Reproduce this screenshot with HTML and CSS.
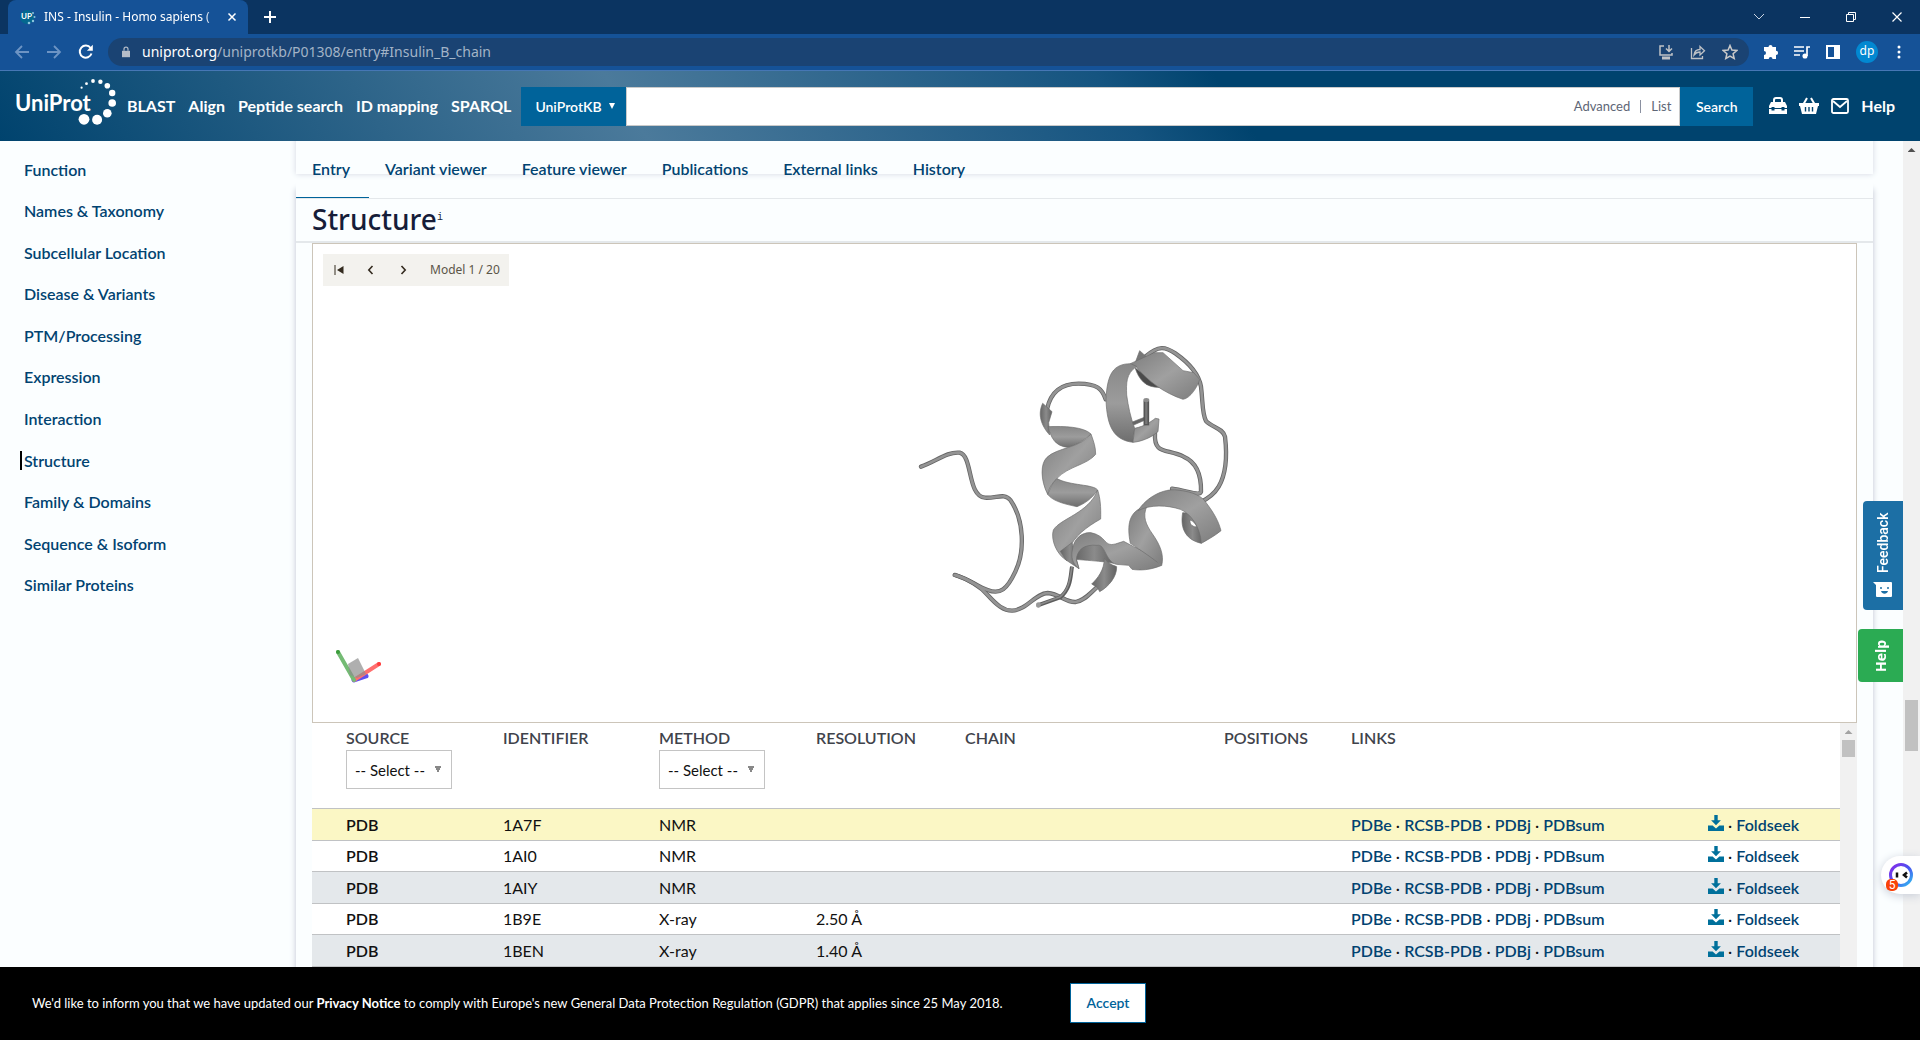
FILE: index.html
```html
<!DOCTYPE html>
<html lang="en">
<head>
<meta charset="utf-8">
<title>INS - Insulin - Homo sapiens | UniProtKB | UniProt</title>
<link rel="stylesheet" href="styles.css">
</head>
<body>
<svg class="defs" aria-hidden="true">
  <defs>
    <symbol id="download" viewBox="0 0 16 16"><path d="M6.300 0h3.400v5.200h3.200L8 10.200 3.100 5.200h3.200z"/><path d="M0 10.500h4.600L8 13.500l3.400-3h4.600V16H0z"/></symbol>
    <linearGradient id="g1" x1="0" y1="0" x2="1" y2="1"><stop offset="0" stop-color="#7e7e7e"/><stop offset=".5" stop-color="#a0a0a0"/><stop offset="1" stop-color="#7c7c7c"/></linearGradient>
    <linearGradient id="g2" x1="0" y1="0" x2="0" y2="1"><stop offset="0" stop-color="#888"/><stop offset=".5" stop-color="#9c9c9c"/><stop offset="1" stop-color="#6e6e6e"/></linearGradient>
    <linearGradient id="g3" x1="0" y1="0" x2="1" y2="0"><stop offset="0" stop-color="#666"/><stop offset=".5" stop-color="#8b8b8b"/><stop offset="1" stop-color="#626262"/></linearGradient>
    <linearGradient id="face" x1="0" y1="0" x2="1" y2="1"><stop offset="0" stop-color="#8a2be8"/><stop offset=".5" stop-color="#4a52f0"/><stop offset="1" stop-color="#31c0f0"/></linearGradient>
  </defs>
</svg>

<div class="tabstrip">
  <div class="browser-tab">
    <svg class="favicon" viewBox="0 0 16 16"><circle cx="7" cy="8" r="7" fill="#04688f"/><text x="1" y="10" font-size="8" font-weight="700" fill="#fff" font-family="Lato, sans-serif">UP</text><g fill="#8cc6dd"><circle cx="13" cy="4" r="1"/><circle cx="14.500" cy="8" r="1"/><circle cx="13" cy="12" r="1.200"/><circle cx="9" cy="14" r="1.300"/></g></svg>
    <span class="tab-title">INS - Insulin - Homo sapiens (</span>
    <button class="plain" aria-label="Close tab"><svg width="10" height="10" viewBox="0 0 10 10"><path d="M1.500 1.500l7 7m0-7l-7 7" stroke="#fff" stroke-width="1.500"/></svg></button>
  </div>
  <button class="plain new-tab" aria-label="New tab"><svg width="12" height="12" viewBox="0 0 12 12"><path d="M6 0v12M0 6h12" stroke="#fff" stroke-width="2"/></svg></button>
  <div class="window-buttons">
    <button class="plain" aria-label="Search tabs"><svg width="12" height="12" viewBox="0 0 12 12"><path d="M1 3l5 5 5-5" fill="none" stroke="#c9d4e2"/></svg></button>
    <button class="plain" aria-label="Minimize"><svg width="12" height="12" viewBox="0 0 12 12"><path d="M1 6.500h10" stroke="#fff"/></svg></button>
    <button class="plain" aria-label="Restore"><svg width="12" height="12" viewBox="0 0 12 12"><path d="M1.500 3.500h7v7h-7zM3.500 3V1.500h7v7H9" fill="none" stroke="#fff"/></svg></button>
    <button class="plain" aria-label="Close"><svg width="12" height="12" viewBox="0 0 12 12"><path d="M1.500 1.500l9 9m0-9l-9 9" stroke="#fff" stroke-width="1.200"/></svg></button>
  </div>
</div>

<div class="toolbar">
  <div class="history-buttons">
    <button class="plain" aria-label="Back"><svg width="16" height="16" viewBox="0 0 16 16"><path d="M15 8H2m6-6L2 8l6 6" fill="none" stroke="#6d94c4" stroke-width="1.800"/></svg></button>
    <button class="plain" aria-label="Forward"><svg width="16" height="16" viewBox="0 0 16 16"><path d="M1 8h13M8 2l6 6-6 6" fill="none" stroke="#6d94c4" stroke-width="1.800"/></svg></button>
    <button class="plain" aria-label="Reload"><svg width="16" height="16" viewBox="0 0 16 16"><path d="M13.500 9.500A6 6 0 1 1 12.600 4" fill="none" stroke="#fff" stroke-width="2"/><path d="M14.800.800v6H8.900z" fill="#fff"/></svg></button>
  </div>
  <div class="omnibox">
    <svg width="8" height="12" viewBox="0 0 10 13"><path d="M0 5h10v8H0z" fill="#b4bcc8"/><path d="M2.500 5V3a2.500 2.500 0 0 1 5 0v2" fill="none" stroke="#b4bcc8" stroke-width="1.500"/></svg>
    <span class="url"><span class="domain">uniprot.org</span>/uniprotkb/P01308/entry#Insulin_B_chain</span>
    <svg width="16" height="16" viewBox="0 0 16 16" fill="none" stroke="#bfc2c6" stroke-width="1.500"><path d="M6 2H2v9h12V9M11 1v6M8 4.500l3 3 3-3"/><path d="M4 14h8" stroke-width="3"/></svg>
    <svg width="16" height="16" viewBox="0 0 16 16" fill="none" stroke="#bfc2c6" stroke-width="1.300"><path d="M1.500 4v10.500h11V12M4 11c.500-4 3-5.500 6-5.500V2.500l4.500 4.300L10 11V8c-3 0-4.500 1-6 3z"/></svg>
    <svg width="16" height="16" viewBox="0 0 16 16" fill="none" stroke="#c9c9c9" stroke-width="1.500"><path d="M8 1.500l1.900 4.600 4.900.400-3.700 3.200 1.100 4.800L8 12l-4.200 2.500 1.100-4.800L1.200 6.500l4.900-.400z"/></svg>
  </div>
  <div class="extensions">
    <svg width="16" height="16" viewBox="0 0 16 16" fill="#fff"><path d="M5.500 3a2 2 0 0 1 4 0H13v3.800a2.100 2.100 0 0 1 0 4.200v4H9.500a1.900 1.900 0 0 0-3.800 0H1v-4a2 2 0 0 0 0-4V3z"/></svg>
    <svg width="16" height="16" viewBox="0 0 16 16" fill="none" stroke="#fff" stroke-width="1.700"><path d="M0 3h10M0 7h10M0 11h6M16 3h-3v9"/><circle cx="11" cy="12" r="1.700" fill="#fff"/></svg>
    <svg width="16" height="16" viewBox="0 0 16 16"><path d="M1 1h14v14H1zM3 3v10h6V3z" fill="#fff" fill-rule="evenodd"/></svg>
    <span class="avatar">dp</span>
    <svg width="4" height="14" viewBox="0 0 4 14" fill="#fff"><circle cx="2" cy="2" r="1.500"/><circle cx="2" cy="7" r="1.500"/><circle cx="2" cy="12" r="1.500"/></svg>
  </div>
</div>

<header class="site-header">
  <a href="#" class="logo" aria-label="UniProt home">
    <svg width="101" height="50" viewBox="0 0 101 50" fill="#fff"><text x="-1" y="34" class="logo-text">UniProt</text><circle cx="65.600" cy="10.700" r="1.100"/><circle cx="70.500" cy="6.700" r="1.400"/><circle cx="77" cy="4" r="1.900"/><circle cx="84.400" cy="4.700" r="2.200"/><circle cx="91.300" cy="8.700" r="2.800"/><circle cx="96.200" cy="16" r="3.200"/><circle cx="96.200" cy="26" r="3.800"/><circle cx="91.300" cy="36.300" r="4.300"/><circle cx="81.100" cy="42.700" r="5"/><circle cx="68" cy="42.300" r="5.400"/></svg>
  </a>
  <nav class="tools">
    <a href="#">BLAST</a><a href="#">Align</a><a href="#">Peptide search</a><a href="#">ID mapping</a><a href="#">SPARQL</a>
  </nav>
  <form class="search">
    <button type="button" class="namespace">UniProtKB <svg width="6" height="6" viewBox="0 0 6 6"><path d="M0 0h6L3 6z" fill="#fff"/></svg></button>
    <div class="search-box">
      <input type="text" aria-label="Search UniProtKB">
      <a href="#">Advanced</a><span class="divider"></span><a href="#">List</a>
    </div>
    <button type="button" class="go">Search</button>
  </form>
  <nav class="user-links">
    <a href="#" aria-label="Tool results"><svg width="18" height="18" viewBox="0 0 18 18"><path d="M5 5V3a2 2 0 0 1 2-2h4a2 2 0 0 1 2 2v2" fill="none" stroke="#fff" stroke-width="2"/><path d="M2 5h14l2 4v2h-2.500v-1h-3v1h-7v-1h-3v1H0V9zM0 12h2.500v1.500h3V12h7v1.500h3V12H18v5H0z" fill="#fff"/></svg></a>
    <a href="#" aria-label="Basket"><svg width="20" height="18" viewBox="0 0 20 18"><path d="M4 8l4-7m8 7l-4-7" stroke="#fff" stroke-width="2"/><path d="M0 6h20v3h-1l-2 8H3L1 9H0z" fill="#fff"/><path d="M6.500 10v4.500m3.500-4.500v4.500m3.500-4.500v4.500" stroke="#00436e" stroke-width="1.400"/></svg></a>
    <a href="#" aria-label="Contact"><svg width="18" height="16" viewBox="0 0 18 16" fill="none" stroke="#fff" stroke-width="1.800"><rect x="1" y="1" width="16" height="14" rx="1.500"/><path d="M2 3l7 6 7-6"/></svg></a>
    <a href="#" class="help-link">Help</a>
  </nav>
</header>

<div class="page">
  <aside class="sidebar">
    <ul>
      <li><a href="#">Function</a></li>
      <li><a href="#">Names &amp; Taxonomy</a></li>
      <li><a href="#">Subcellular Location</a></li>
      <li><a href="#">Disease &amp; Variants</a></li>
      <li><a href="#">PTM/Processing</a></li>
      <li><a href="#">Expression</a></li>
      <li><a href="#">Interaction</a></li>
      <li><a href="#" class="current">Structure</a></li>
      <li><a href="#">Family &amp; Domains</a></li>
      <li><a href="#">Sequence &amp; Isoform</a></li>
      <li><a href="#">Similar Proteins</a></li>
    </ul>
  </aside>

  <main>
    <nav class="entry-tabs">
      <a href="#" class="active">Entry</a><a href="#">Variant viewer</a><a href="#">Feature viewer</a><a href="#">Publications</a><a href="#">External links</a><a href="#">History</a>
    </nav>
    <section class="card">
      <h2>Structure<sup>i</sup></h2>
      <div class="card-body">
        <div class="viewer">
          <div class="model-bar">
            <button class="plain" aria-label="First model"><svg width="10" height="10" viewBox="0 0 10 10"><path d="M.500 0h1v10h-1zM9.500 1v8L3 5z" fill="#332b1f"/></svg></button>
            <button class="plain" aria-label="Previous model"><svg width="10" height="10" viewBox="0 0 10 10"><path d="M6.500 1L2.800 5l3.700 4" fill="none" stroke="#332b1f" stroke-width="1.600"/></svg></button>
            <button class="plain" aria-label="Next model"><svg width="10" height="10" viewBox="0 0 10 10"><path d="M3.500 1l3.700 4-3.700 4" fill="none" stroke="#332b1f" stroke-width="1.600"/></svg></button>
            <span>Model 1 / 20</span>
          </div>
          <svg class="protein" viewBox="14 24 1080 930" role="img" aria-label="Insulin structure">
            <g class="coil-edge">
              <path id="c1" d="M62 440C105 426 140 394 178 398C218 408 200 528 254 533C290 535 312 518 330 540C372 600 374 695 345 755C320 808 300 825 262 810C230 800 205 775 163 765"/>
              <path id="c2" d="M165 765C215 782 240 800 262 825C290 856 310 872 335 872C380 870 405 820 442 819C480 822 495 848 526 846C555 840 568 820 592 800"/>
              <path id="c4" d="M440 268C452 210 490 191 535 191C590 192 605 205 616 238"/>
              <path id="c5" d="M735 110C775 75 795 80 825 100C868 130 895 160 902 200C908 250 905 280 917 303C935 322 968 325 974 350C980 400 978 460 955 500C942 522 925 535 900 547"/>
              <path id="c6" d="M764 340C760 405 800 385 850 410C892 428 903 470 902 515C898 530 860 512 815 506"/>
            </g>
            <g class="coil-light">
              <use href="#c1"/><use href="#c2"/><use href="#c4"/><use href="#c5"/><use href="#c6"/>
            </g>
            <g class="ribbon">
              <path fill="url(#g3)" d="M524 718C522 676 560 662 600 662L630 700L640 730L614 726C590 723 560 721 524 718Z"/>
              <path fill="url(#g3)" d="M612 715C625 733 640 736 649 740C650 770 625 800 598 815L592 803L574 792C592 775 612 750 612 715Z"/>
              <path fill="url(#g3)" d="M427 250L455 275L445 308L448 345C430 325 408 290 427 250Z"/>
              <path fill="url(#g2)" d="M443 320C490 318 550 320 572 342C552 360 530 375 505 382C462 380 452 350 443 320Z"/>
              <path fill="url(#g2)" d="M468 475C510 498 578 492 592 510C575 535 555 550 530 560C480 550 455 540 442 523C450 505 455 490 468 475Z"/>
              <path fill="url(#g1)" d="M572 342C580 365 586 380 586 403C560 435 505 438 470 475C455 490 445 505 442 523C420 480 420 430 440 412C470 382 540 385 572 342Z"/>
              <path fill="url(#g1)" d="M592 510C600 535 602 560 601 597C560 620 520 650 508 685C495 695 493 705 500 722C470 705 450 660 459 630C480 595 565 580 592 510Z"/>
              <path fill="url(#g3)" d="M480 694L515 668L536 746L497 720Z"/>
              <path fill="url(#g1)" d="M516 690C520 655 545 636 572 638C620 648 610 682 645 672L670 664L700 680C750 700 768 725 782 737C750 750 720 752 695 748L685 736L648 733C615 725 615 670 590 676C550 672 530 690 528 720L536 746C515 730 512 710 516 690Z"/>
              <path fill="url(#g1)" d="M690 670C678 610 690 580 720 565L740 558C725 590 738 615 755 640C780 675 792 705 784 737C762 718 720 690 690 670Z"/>
              <path fill="url(#g3)" fill-rule="evenodd" d="M847 578C838 630 860 660 903 670L908 610L880 580ZM869 600C867 615 880 622 890 620C884 610 878 602 869 600Z"/>
              <path fill="url(#g1)" d="M713 572C740 530 790 505 830 510C880 515 905 530 915 545C942 580 955 605 962 632C940 650 920 660 903 670C900 620 870 580 840 568C800 555 750 553 713 572Z"/>
              <path fill="#777" d="M704 130L718 92L738 110L725 135Z"/>
              <path fill="#4b4b4b" d="M704 143L782 202C735 205 716 178 704 143Z"/>
              <path fill="url(#g1)" d="M690 131L762 98L788 98L848 152L880 158L898 178C892 200 870 235 848 238C790 218 745 185 707 140Z"/>
              <path fill="url(#g2)" d="M709 139C676 162 678 190 679 225C684 260 690 290 703 325L698 367C640 360 620 320 617 240C620 160 640 132 690 131Z"/>
              <path fill="#666" d="M696 306L742 288L744 296L700 315Z"/>
              <path fill="url(#g1)" d="M698 367L703 325C735 318 750 306 765 295L776 297L773 335C750 355 720 365 698 367Z"/>
            </g>
            <path d="M738 316V242" stroke="#555" stroke-width="17"/>
            <path d="M738 312V242" stroke="#777" stroke-width="7"/>
            <ellipse cx="738" cy="240" rx="9" ry="6" fill="#8c8c8c"/>
            <path d="M412 856L480 832C512 805 510 770 515 740" fill="none" stroke="#5d5d5d" stroke-width="12"/>
            <path d="M416 854L480 830C510 803 509 770 515 740" fill="none" stroke="#8a8a8a" stroke-width="5"/>
            <ellipse cx="414" cy="855" rx="7" ry="8" fill="#999"/>
          </svg>
          <svg class="axes" width="50" height="36" viewBox="0 0 50 36" stroke-linecap="round">
            <path d="M18 32l12-4" stroke="#5c50f0" stroke-width="5"/>
            <path d="M18 32L43 16" stroke="#ff6f6f" stroke-width="4"/>
            <path d="M18 32L2 4" stroke="#74bb74" stroke-width="4"/>
            <path d="M12 16l10-6 8 16-9 4-7-3z" fill="#8d8d8d" fill-opacity=".700"/>
            <circle cx="2" cy="4" r="2" fill="#3c9c3c"/><circle cx="43" cy="16" r="2" fill="#ff3c3c"/>
          </svg>
        </div>
        <div class="table-wrap">
          <table>
            <colgroup><col class="c-source"><col class="c-id"><col class="c-method"><col class="c-res"><col><col class="c-pos"><col class="c-links"><col class="c-tools"></colgroup>
            <thead>
              <tr>
                <th><label for="source">SOURCE</label><select id="source"><option>-- Select --</option></select></th>
                <th>IDENTIFIER</th>
                <th><label for="method">METHOD</label><select id="method"><option>-- Select --</option></select></th>
                <th>RESOLUTION</th><th>CHAIN</th><th>POSITIONS</th><th>LINKS</th><th></th>
              </tr>
            </thead>
            <tbody>
              <tr class="selected"><td>PDB</td><td>1A7F</td><td>NMR</td><td></td><td></td><td></td><td><a href="#">PDBe</a> · <a href="#">RCSB-PDB</a> · <a href="#">PDBj</a> · <a href="#">PDBsum</a></td><td><a href="#" aria-label="Download"><svg class="dl"><use href="#download"/></svg></a> · <a href="#">Foldseek</a></td></tr>
              <tr><td>PDB</td><td>1AI0</td><td>NMR</td><td></td><td></td><td></td><td><a href="#">PDBe</a> · <a href="#">RCSB-PDB</a> · <a href="#">PDBj</a> · <a href="#">PDBsum</a></td><td><a href="#" aria-label="Download"><svg class="dl"><use href="#download"/></svg></a> · <a href="#">Foldseek</a></td></tr>
              <tr class="shaded"><td>PDB</td><td>1AIY</td><td>NMR</td><td></td><td></td><td></td><td><a href="#">PDBe</a> · <a href="#">RCSB-PDB</a> · <a href="#">PDBj</a> · <a href="#">PDBsum</a></td><td><a href="#" aria-label="Download"><svg class="dl"><use href="#download"/></svg></a> · <a href="#">Foldseek</a></td></tr>
              <tr><td>PDB</td><td>1B9E</td><td>X-ray</td><td>2.50 Å</td><td></td><td></td><td><a href="#">PDBe</a> · <a href="#">RCSB-PDB</a> · <a href="#">PDBj</a> · <a href="#">PDBsum</a></td><td><a href="#" aria-label="Download"><svg class="dl"><use href="#download"/></svg></a> · <a href="#">Foldseek</a></td></tr>
              <tr class="shaded"><td>PDB</td><td>1BEN</td><td>X-ray</td><td>1.40 Å</td><td></td><td></td><td><a href="#">PDBe</a> · <a href="#">RCSB-PDB</a> · <a href="#">PDBj</a> · <a href="#">PDBsum</a></td><td><a href="#" aria-label="Download"><svg class="dl"><use href="#download"/></svg></a> · <a href="#">Foldseek</a></td></tr>
            </tbody>
          </table>
          <div class="scrollbar small"><span class="arrow"></span><span class="thumb"></span></div>
        </div>
      </div>
    </section>
  </main>

  <div class="scrollbar"><span class="arrow"></span><span class="spacer"></span><span class="thumb"></span><span class="rest"></span></div>

  <div class="side-buttons">
    <button class="feedback"><svg width="20" height="18" viewBox="0 0 20 18"><path d="M1 1h17a1 1 0 0 1 1 1v13a1 1 0 0 1-1 1H4a1 1 0 0 1-1-1V4L0 1z" fill="#fff"/><circle cx="8" cy="7" r="1" fill="#1c6fa5"/><circle cx="15" cy="7" r="1" fill="#1c6fa5"/><path d="M8 10h7c-1 3.500-6 3.500-7 0z" fill="#1c6fa5"/></svg><span>Feedback</span></button>
    <button class="help">Help</button>
  </div>
  <button class="assistant" aria-label="Assistant, 5 notifications">
    <svg width="26" height="26" viewBox="0 0 26 26"><circle cx="13" cy="13" r="10.500" fill="#fff" stroke="url(#face)" stroke-width="3"/><path d="M9 10.500v5M19 10.500l-3 2.500 3 2.500" fill="none" stroke="#111" stroke-width="2.500"/></svg>
    <span class="badge">5</span>
  </button>
</div>

<footer class="notice">
  <p>We'd like to inform you that we have updated our <a href="#">Privacy Notice</a> to comply with Europe's new General Data Protection Regulation (GDPR) that applies since 25 May 2018.</p>
  <button>Accept</button>
</footer>
</body>
</html>
```

FILE: styles.css
```css
* { box-sizing: border-box; }

body {
  margin: 0;
  height: 100vh;
  display: flex;
  flex-direction: column;
  overflow: hidden;
  background: #fbfeff;
  color: #111;
  font-family: Lato, sans-serif;
  font-size: 16px;
  line-height: 24px;
}

a { color: #014371; text-decoration: none; }
svg { display: block; flex: none; }
button { font-family: inherit; cursor: pointer; }
.defs { position: absolute; width: 0; height: 0; }
.plain { display: flex; padding: 0; border: 0; background: none; }

/* Browser frame */
.tabstrip {
  flex: none;
  display: flex;
  align-items: center;
  height: 34px;
  padding: 0 17px 0 8px;
  background: #0b3461;
}
.browser-tab {
  display: flex;
  align-items: center;
  gap: 8px;
  width: 240px;
  height: 34px;
  padding: 0 11px 0 12px;
  border-radius: 8px 8px 0 0;
  background: #155297;
  color: #fff;
  font: 12px/16px "Noto Sans", sans-serif;
}
.favicon { width: 16px; height: 16px; }
.tab-title {
  flex: 1;
  white-space: nowrap;
  mask-image: linear-gradient(90deg, #000 92%, transparent);
}
.new-tab { margin-left: 16px; }
.window-buttons { display: flex; gap: 34px; margin-left: auto; }

.toolbar {
  flex: none;
  display: flex;
  align-items: center;
  gap: 14px;
  height: 37px;
  padding: 0 19px 0 14px;
  border-bottom: 1px solid #4677b5;
  background: #155297;
}
.history-buttons { display: flex; gap: 16px; }
.omnibox {
  flex: 1;
  display: flex;
  align-items: center;
  gap: 16px;
  height: 28px;
  padding: 0 11px 0 14px;
  border-radius: 14px;
  background: #1a4373;
}
.url {
  flex: 1;
  margin-left: -4px;
  color: #a3b4c7;
  font: 14px/20px "Noto Sans", sans-serif;
}
.domain { color: #fff; }
.extensions { display: flex; align-items: center; gap: 15px; }
.avatar {
  width: 22px;
  height: 22px;
  margin-right: 4px;
  border-radius: 50%;
  background: #0288d1;
  color: #fff;
  font: 12px/20px "Noto Sans", sans-serif;
  text-align: center;
}

/* Site header */
.site-header {
  flex: none;
  display: flex;
  align-items: center;
  height: 70px;
  padding: 0 25px 0 16px;
  background: linear-gradient(56deg, #00436e 0, #4b7a9b 33%, #155480 58%, #00436e 64%);
}
.logo { align-self: flex-start; padding-top: 6px; }
.logo-text { font: 700 22px Lato, sans-serif; }
.tools { display: flex; gap: 13px; margin: 0 10px; }
.tools a, .help-link { color: #fff; font-weight: 700; white-space: nowrap; }
.search { flex: 1; display: flex; height: 39px; margin-right: 16px; }
.namespace, .go { border: 0; background: #00639a; color: #fff; font-size: 14px; font-weight: 600; }
.namespace {
  display: flex;
  align-items: center;
  gap: 7px;
  width: 105px;
  padding: 0 0 0 14px;
}
.go { width: 73px; padding: 0; }
.search-box {
  flex: 1;
  display: flex;
  align-items: center;
  gap: 10px;
  padding-right: 8px;
  border: 1px solid #cacaca;
  background: #fff;
}
.search-box input { flex: 1; min-width: 0; border: 0; outline: 0; background: none; }
.search-box a { color: #5e6676; font-size: 13px; }
.divider { width: 1px; height: 13px; background: #8a90a0; }
.user-links { display: flex; align-items: center; gap: 12px; }

/* Page */
.page { position: relative; flex: 1; min-height: 0; display: flex; overflow: hidden; }
.sidebar { flex: none; width: 296px; padding: 8px 24px; }
.sidebar ul {
  display: grid;
  grid-auto-rows: 1fr;
  align-items: center;
  height: 457px;
  margin: 0;
  padding: 0;
  list-style: none;
}
.sidebar a, .entry-tabs a { font-weight: 600; }
.sidebar a { position: relative; }
.current::before {
  content: "";
  position: absolute;
  top: 0;
  left: -4px;
  width: 2px;
  height: 19px;
  background: #000;
}
main { flex: 1; min-width: 0; margin-right: 30px; }

.entry-tabs {
  position: relative;
  z-index: 1;
  display: flex;
  height: 58px;
  border-bottom: 1px solid #e4e8eb;
  background: #fbfeff;
  white-space: nowrap;
}
.entry-tabs::before {
  content: "";
  position: absolute;
  inset: -10px 0 24px;
  box-shadow: 0 0 6px #d4d8e2;
  background: #fbfeff;
}
.entry-tabs a { position: relative; padding: 16px 19px 0 16px; }
.entry-tabs .active { border-bottom: 1px solid #00639a; }

.card {
  height: 100%;
  margin-top: -10px;
  padding-top: 10px;
  background: #fbfeff;
  box-shadow: 0 0 6px #c0c5d2;
}
h2 {
  height: 44px;
  margin: 0;
  padding: 0 16px;
  border-bottom: 2px solid #e4e8eb;
  color: #161d39;
  font: 500 28px/40px "Noto Sans", sans-serif;
}
sup { font: 10px/10px "Liberation Mono", monospace; vertical-align: 10px; }
.card-body { padding: 0 16px; }
.viewer {
  position: relative;
  display: flex;
  justify-content: center;
  align-items: center;
  height: 480px;
  border: 1px solid #ccc5b9;
  background: #fff;
}
.model-bar {
  position: absolute;
  top: 10px;
  left: 10px;
  display: flex;
  align-items: center;
  gap: 22px;
  height: 32px;
  padding: 0 9px 0 11px;
  background: #f3f2ee;
  color: #5b5548;
  font: 12px/16px "Noto Sans", sans-serif;
}
.protein { width: 360px; height: 310px; }
.coil-edge, .coil-light { fill: none; stroke-linecap: round; }
.coil-edge { stroke: #666; stroke-width: 13px; }
.coil-light { stroke: #949494; stroke-width: 8px; }
.ribbon { stroke: #6c6c6c; stroke-width: 2px; stroke-linejoin: round; }
.axes { position: absolute; bottom: 38px; left: 23px; }

/* Structures table */
.table-wrap { display: flex; background: #fff; }
table { flex: 1; width: 100%; table-layout: fixed; border-collapse: separate; border-spacing: 0; }
.c-source { width: 191px; }
.c-id { width: 156px; }
.c-method { width: 157px; }
.c-res { width: 149px; }
.c-pos { width: 127px; }
.c-links { width: 357px; }
.c-tools { width: 132px; }
th, td { padding: 0; border-bottom: 1px solid #c0c2c4; text-align: left; white-space: nowrap; }
th:first-child, td:first-child { padding-left: 34px; }
th { height: 86px; padding-top: 3px; color: #3f434b; font-weight: 600; vertical-align: top; }
td { height: 31px; }
td:first-child, td a { font-weight: 600; }
th label { display: block; }
select {
  appearance: none;
  width: 106px;
  height: 39px;
  padding: 0 8px;
  border: 1px solid #c4c4c4;
  border-radius: 0;
  background: #fff conic-gradient(from -27deg at 50% 100%, #888 54deg, transparent 0) no-repeat right 9px center / 8px 7px;
  color: #111;
  font: 15px Lato, sans-serif;
}
.selected td, .shaded td { height: 32px; }
.selected { background: #fbf7c5; }
.shaded { background: #e4e8eb; }
td a[aria-label] { display: inline-block; }
.dl { width: 16px; height: 16px; fill: #00709b; }

.scrollbar {
  flex: none;
  display: flex;
  flex-direction: column;
  align-items: center;
  width: 17px;
  background: #f1f1f1;
}
.arrow { width: 0; height: 17px; }
.arrow::before {
  content: "";
  display: block;
  margin: 7px 0 0 -4px;
  width: 8px;
  height: 4px;
  background: #505050;
  clip-path: polygon(50% 0, 100% 100%, 0 100%);
}
.small .arrow::before { background: #a3a3a3; }
.thumb { width: 13px; height: 51px; background: #c1c1c1; }
.small .thumb { height: 17px; }
.spacer { flex: 541; }
.rest { flex: 216; }

/* Floating controls */
.side-buttons {
  position: absolute;
  z-index: 2;
  top: 360px;
  right: 17px;
  display: flex;
  flex-direction: column;
  align-items: flex-end;
  gap: 19px;
}
.side-buttons button {
  display: flex;
  align-items: center;
  justify-content: center;
  padding: 0;
  border: 0;
  border-radius: 0 4px 4px 0;
  color: #fff;
  writing-mode: vertical-rl;
  transform: rotate(180deg);
}
.feedback { gap: 8px; width: 40px; height: 109px; background: #1c6fa5; font: 500 14px Roboto, sans-serif; }
.feedback svg { transform: rotate(180deg); }
.side-buttons .help { width: 45px; height: 53px; background: #2bab53; font: 700 14px "Open Sans", sans-serif; }
.assistant {
  position: absolute;
  z-index: 2;
  top: 715px;
  right: 0;
  width: 39px;
  height: 38px;
  padding: 6px 0 6px 7px;
  border: 0;
  border-radius: 19px 0 0 19px;
  background: #fff;
  box-shadow: 0 2px 10px #c9ced8;
}
.badge {
  position: absolute;
  left: 5px;
  bottom: 3px;
  width: 12px;
  height: 12px;
  border-radius: 5px;
  background: #f9420a;
  color: #fff;
  font: 12px/12px Roboto, sans-serif;
  text-align: center;
}

.notice {
  position: relative;
  z-index: 3;
  flex: none;
  display: flex;
  align-items: center;
  gap: 32px;
  height: 73px;
  padding: 0 32px 2px;
  background: #000;
  color: #fff;
}
.notice p { flex: 0 1 1006px; margin: 0; font-size: 13px; }
.notice a { color: #fff; font-weight: 700; }
.notice button {
  width: 76px;
  height: 40px;
  padding: 0;
  border: 1px solid #00639a;
  background: #fff;
  color: #00639a;
  font-size: 14px;
  font-weight: 600;
}
```
